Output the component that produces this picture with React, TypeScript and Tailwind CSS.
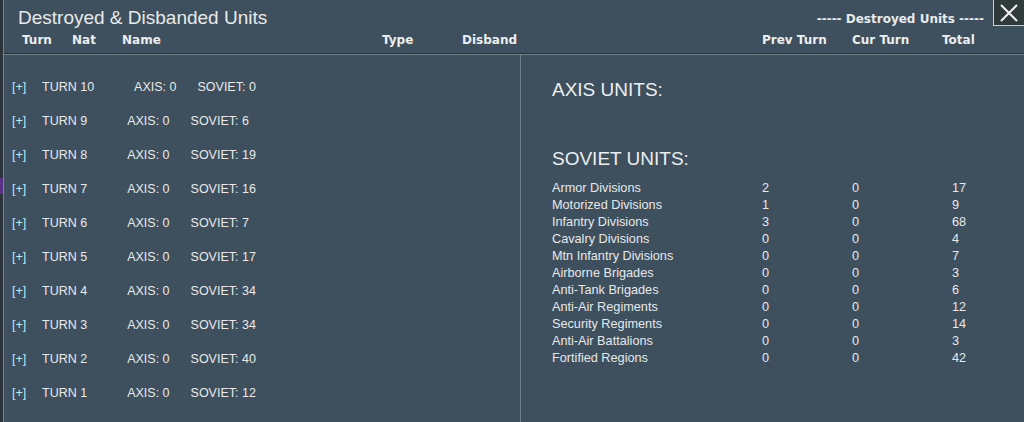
import React from "react";

const turns = [
  { t: 10, a: 0, s: 0 },
  { t: 9, a: 0, s: 6 },
  { t: 8, a: 0, s: 19 },
  { t: 7, a: 0, s: 16 },
  { t: 6, a: 0, s: 7 },
  { t: 5, a: 0, s: 17 },
  { t: 4, a: 0, s: 34 },
  { t: 3, a: 0, s: 34 },
  { t: 2, a: 0, s: 40 },
  { t: 1, a: 0, s: 12 },
];

const units: [string, number, number, number][] = [
  ["Armor Divisions", 2, 0, 17],
  ["Motorized Divisions", 1, 0, 9],
  ["Infantry Divisions", 3, 0, 68],
  ["Cavalry Divisions", 0, 0, 4],
  ["Mtn Infantry Divisions", 0, 0, 7],
  ["Airborne Brigades", 0, 0, 3],
  ["Anti-Tank Brigades", 0, 0, 6],
  ["Anti-Air Regiments", 0, 0, 12],
  ["Security Regiments", 0, 0, 14],
  ["Anti-Air Battalions", 0, 0, 3],
  ["Fortified Regions", 0, 0, 42],
];

const sans = { fontFamily: '"Liberation Sans", Arial, sans-serif' };
const bold = { fontFamily: '"DejaVu Sans", Verdana, sans-serif' };

export default function App() {
  return (
    <div className="flex w-[1024px] h-[422px] overflow-hidden bg-[#3e4f5d] text-[#e6e9ea]" style={sans}>
      {/* left strip of background */}
      <div className="w-[3px] h-full bg-[#2c343a] flex flex-col">
        <div className="h-[178px]" />
        <div className="h-[16px] bg-[#5a2f86]" />
      </div>
      <div className="relative flex-1 flex flex-col border-l border-[#76848e] bg-[#3e4f5d]">
        {/* header */}
        <div className="h-[53px] flex flex-col">
          <div className="flex items-start h-[32px]">
            <div className="pl-[14px] pt-[7px] text-[19px] leading-[22px] text-[#e8eaeb]">
              Destroyed &amp; Disbanded Units
            </div>
            <div
              className="ml-auto mr-[40px] pt-[12px] text-[12px] font-bold leading-[15px] text-[#e8eaeb]"
              style={bold}
            >
              ----- Destroyed Units -----
            </div>
          </div>
          <div className="flex pl-[18px] pt-[1px] text-[12px] font-bold leading-[15px] text-[#eceeef]" style={bold}>
            <div className="w-[50px]">Turn</div>
            <div className="w-[50px]">Nat</div>
            <div className="w-[260px]">Name</div>
            <div className="w-[80px]">Type</div>
            <div className="w-[300px]">Disband</div>
            <div className="w-[90px]">Prev Turn</div>
            <div className="w-[90px]">Cur Turn</div>
            <div>Total</div>
          </div>
        </div>
        <div className="h-[1px] bg-[#26323b]" />
        <div className="h-[1px] bg-[#75838d]" />
        {/* body */}
        <div className="flex flex-1">
          <div className="w-[517px] border-r border-[#6f7e89] pt-[15px]">
            {turns.map((r) => (
              <div key={r.t} className="flex items-center h-[34px] text-[12.5px] leading-[16px] text-[#e8eaeb]">
                <span className="ml-[8px] w-[30px] text-[#bfeaf2]">[+]</span>
                <span>TURN {r.t}</span>
                <span className="ml-[40px]">AXIS: {r.a}</span>
                <span className="ml-[21px]">SOVIET: {r.s}</span>
              </div>
            ))}
          </div>
          <div className="flex-1 pl-[31px] pt-[24px]">
            <div className="text-[19px] leading-[22px] text-[#eceeef]">AXIS UNITS:</div>
            <div className="mt-[47px] text-[19px] leading-[22px] text-[#eceeef]">SOVIET UNITS:</div>
            <div className="mt-[10px] flex flex-col">
              {units.map(([n, p, c, t]) => (
                <div key={n} className="flex h-[17px] items-center text-[12.7px] leading-[15px] text-[#e6e9ea]">
                  <div className="w-[210px]">{n}</div>
                  <div className="w-[90px]">{p}</div>
                  <div className="w-[100px]">{c}</div>
                  <div>{t}</div>
                </div>
              ))}
            </div>
          </div>
        </div>
        {/* close button */}
        <div className="absolute top-0 right-0 w-[31px] h-[26px] bg-[#2f3b3a] border-l border-b border-[#c9cdcd] flex items-center justify-center">
          <svg width="20" height="20" viewBox="0 0 20 20">
            <path d="M2 2 L18 18 M18 2 L2 18" stroke="#f2f2f2" strokeWidth="2" />
          </svg>
        </div>
      </div>
    </div>
  );
}
